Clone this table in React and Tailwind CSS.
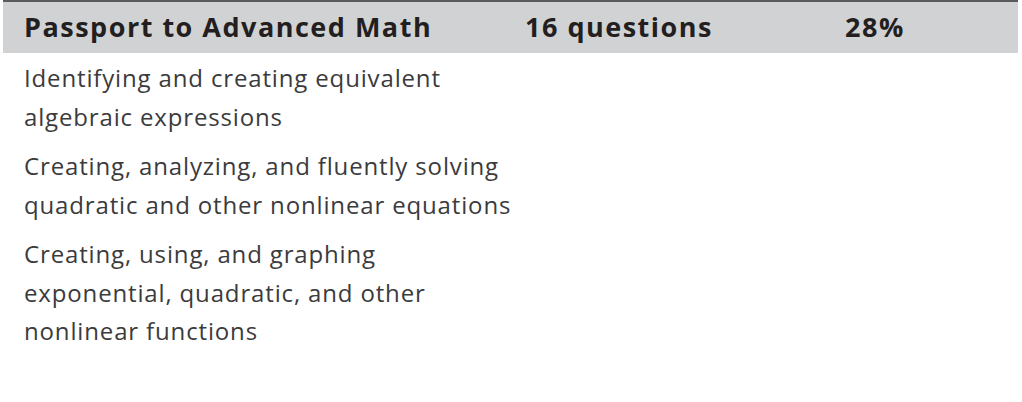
export default function App() {
  const items = [
    ["Identifying and creating equivalent", "algebraic expressions"],
    ["Creating, analyzing, and fluently solving", "quadratic and other nonlinear equations"],
    ["Creating, using, and graphing", "exponential, quadratic, and other", "nonlinear functions"],
  ];
  return (
    <div className="w-[1022px] h-[402px] bg-white overflow-hidden">
      <div className="ml-[3px] w-[1015px]">
        <div
          className="h-[53px] border-t-2 border-[#5a5a5c] bg-[#d1d2d4] flex items-center pl-[21px] text-[#231f20] font-bold text-[27px] tracking-[1.5px]"
          style={{ fontFamily: '"Open Sans", Arial, sans-serif' }}
        >
          <div className="w-[501px]">Passport to Advanced Math</div>
          <div className="w-[320px]">16 questions</div>
          <div>28%</div>
        </div>
        <div
          className="pl-[21px] pt-[6px] flex flex-col gap-[11px] text-[#3b3b3d] text-[24px] leading-[38.5px] tracking-[0.85px]"
          style={{ fontFamily: '"Open Sans", "Liberation Sans", sans-serif' }}
        >
          {items.map((lines, i) => (
            <div key={i}>
              {lines.map((l, j) => (
                <div key={j}>{l}</div>
              ))}
            </div>
          ))}
        </div>
      </div>
    </div>
  );
}
